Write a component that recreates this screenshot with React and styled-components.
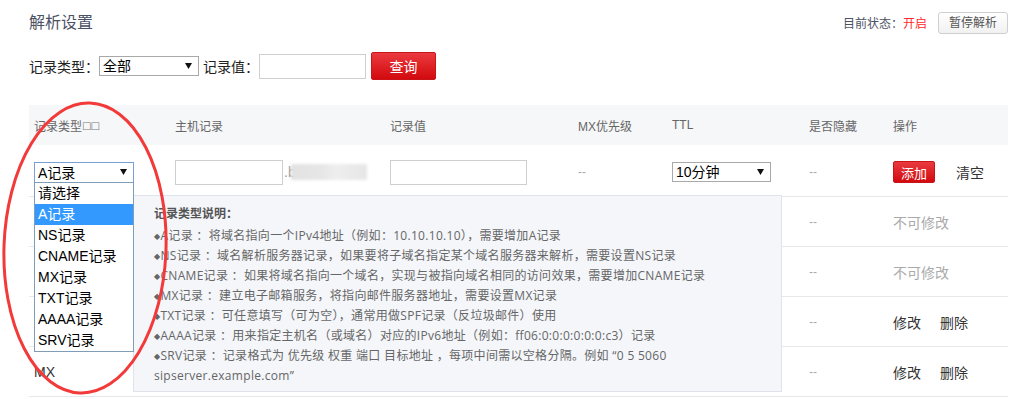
import React from 'react';
import styled, { createGlobalStyle } from 'styled-components';

const GlobalStyle = createGlobalStyle`
  html, body { margin: 0; padding: 0; background: #fff; }
  body { font-family: "Liberation Sans", "Noto Sans CJK SC", sans-serif; color: #333; }
  * { box-sizing: border-box; }
`;

const Page = styled.div`
  position: relative;
  width: 1019px;
  height: 399px;
  overflow: hidden;
  padding: 0 11px 0 29px;
`;

const TopBar = styled.div`
  height: 45px;
  display: flex;
  align-items: center;
  justify-content: space-between;
`;

const Title = styled.h1`
  margin: 0;
  font-size: 16px;
  font-weight: normal;
  line-height: 20px;
  color: #4b5263;
`;

const Status = styled.div`
  display: flex;
  align-items: center;
  font-size: 12px;
  color: #4b5263;
`;

const StatusOn = styled.span`
  color: #ff2a2a;
  margin-right: 11px;
`;

const GhostButton = styled.button`
  height: 22px;
  padding: 0 10px;
  border: 1px solid #cfcfcf;
  border-radius: 3px;
  background: linear-gradient(#ffffff, #f1f1f1);
  font-family: inherit;
  font-size: 12px;
  color: #555;
  line-height: 20px;
`;

const FilterRow = styled.div`
  display: flex;
  align-items: center;
  height: 28px;
  margin-top: 7px;
  font-size: 14px;
  color: #222;
`;

const Label = styled.span`
  margin-left: ${p => p.$ml || 0}px;
`;

const FakeSelect = styled.div`
  position: relative;
  width: ${p => p.$w}px;
  height: ${p => p.$h || 20}px;
  border: 1px solid ${p => (p.$focus ? '#7a9fd6' : '#a9a9a9')};
  background: #fff;
  display: flex;
  align-items: flex-end;
  padding: 0 0 0 3px;
  font-size: 14px;
  line-height: 17px;
  color: #000;
`;

const Arrow = styled.svg`
  position: absolute;
  right: 6px;
  top: 6px;
`;

const TextInput = styled.div`
  width: ${p => p.$w}px;
  height: 25px;
  border: 1px solid #cfcfcf;
  background: #fff;
  margin-left: ${p => p.$ml || 0}px;
`;

const RedButton = styled.button`
  width: ${p => p.$w}px;
  height: ${p => p.$h}px;
  margin-left: ${p => p.$ml || 0}px;
  border: 1px solid #c9141a;
  border-radius: 2px;
  background: linear-gradient(#ea3a3f, #d20a0e);
  color: #fff;
  font-family: inherit;
  font-size: ${p => p.$fs}px;
  padding: 0;
`;

const Table = styled.div`
  margin-top: 25px;
  width: 979px;
`;

const cols = '141px 215px 188px 94px 137px 84px 120px';

const HeadRow = styled.div`
  display: grid;
  grid-template-columns: ${cols};
  height: 40px;
  align-items: center;
  background: #f6f7f9;
  font-size: 12px;
  color: #666;
`;

const Boxes = styled.span`
  font-family: "DejaVu Sans", sans-serif;
  font-size: 10px;
  letter-spacing: -1px;
  color: #777;
`;

const Row = styled.div`
  position: relative;
  display: grid;
  grid-template-columns: ${cols};
  height: ${p => p.$h}px;
  align-items: center;
  padding-top: ${p => p.$pt || 0}px;
  border-bottom: 1px solid #e8e8e8;
`;

const Cell = styled.div`
  position: relative;
  display: flex;
  align-items: center;
  padding-left: 5px;
  font-size: ${p => p.$fs || 14}px;
  color: ${p => p.$c || '#333'};
`;

const Dash = styled.span`
  font-size: 12px;
  color: #aaa;
`;

const Domain = styled.span`
  display: flex;
  align-items: center;
  font-size: 14px;
  color: #999;
  margin-left: 1px;
`;

const Blur = styled.span`
  display: inline-block;
  width: 76px;
  height: 16px;
  margin-left: -5px;
  background: linear-gradient(90deg, #e2e2e2 0%, #e6e6e6 40%, #eeeeee 60%, #e6e6e6 100%);
  filter: blur(1.5px);
`;

const Action = styled.span`
  margin-left: ${p => p.$ml || 0}px;
  color: ${p => p.$c || '#333'};
  font-size: 14px;
`;

const DropList = styled.div`
  position: absolute;
  left: 5px;
  top: 37px;
  width: 100px;
  border: 1px solid #7f9db9;
  background: #fff;
  z-index: 3;
`;

const DropItem = styled.div`
  height: 21px;
  line-height: 21px;
  padding-left: 3px;
  font-size: 14px;
  color: ${p => (p.$active ? '#fff' : '#000')};
  background: ${p => (p.$active ? '#3399ff' : '#fff')};
`;

const HelpPanel = styled.div`
  position: absolute;
  left: 104px;
  top: 50px;
  width: 649px;
  height: 197px;
  padding: 8px 20px 7px;
  background: #f4f6fa;
  border: 1px solid #dfe4ec;
  font-family: "Open Sans", "Noto Sans CJK SC", sans-serif;
  font-size: 12px;
  line-height: 20px;
  color: #666;
  z-index: 2;
`;

const HelpTitle = styled.div`
  font-weight: bold;
  color: #555;
  margin-bottom: 2px;
`;

const HelpLine = styled.div`
  letter-spacing: 0.3px;
`;

const Bullet = styled.span`
  font-family: "DejaVu Sans", sans-serif;
  font-size: 8px;
  line-height: 12px;
  color: #666;
  vertical-align: 1px;
`;

const Ellipse = styled.svg`
  position: absolute;
  left: 0;
  top: 98px;
  z-index: 5;
  pointer-events: none;
`;

const ArrowIcon = () => (
  <Arrow width="7" height="6" viewBox="0 0 7 6">
    <path d="M0 0 H7 L3.5 6 Z" fill="#111" />
  </Arrow>
);

const options = ['请选择', 'A记录', 'NS记录', 'CNAME记录', 'MX记录', 'TXT记录', 'AAAA记录', 'SRV记录'];

const helpLines = [
  'A记录 ：将域名指向一个IPv4地址（例如：10.10.10.10），需要增加A记录',
  'NS记录 ：域名解析服务器记录，如果要将子域名指定某个域名服务器来解析，需要设置NS记录',
  'CNAME记录 ：如果将域名指向一个域名，实现与被指向域名相同的访问效果，需要增加CNAME记录',
  'MX记录 ：建立电子邮箱服务，将指向邮件服务器地址，需要设置MX记录',
  'TXT记录 ：可任意填写（可为空），通常用做SPF记录（反垃圾邮件）使用',
  'AAAA记录 ：用来指定主机名（或域名）对应的IPv6地址（例如：ff06:0:0:0:0:0:0:c3）记录',
  'SRV记录 ：记录格式为 优先级 权重 端口 目标地址 ，每项中间需以空格分隔。例如  “0 5 5060 sipserver.example.com”',
];

export default function App() {
  return (
    <>
      <GlobalStyle />
      <Page>
        <TopBar>
          <Title>解析设置</Title>
          <Status>
            <span>目前状态：</span>
            <StatusOn>开启</StatusOn>
            <GhostButton>暂停解析</GhostButton>
          </Status>
        </TopBar>

        <FilterRow>
          <Label>记录类型：</Label>
          <FakeSelect $w={100} $h={20}>
            全部
            <ArrowIcon />
          </FakeSelect>
          <Label $ml={4}>记录值：</Label>
          <TextInput $w={107} />
          <RedButton $w={65} $h={28} $ml={5} $fs={14}>查询</RedButton>
        </FilterRow>

        <Table>
          <HeadRow>
            <Cell $fs={12} $c="#666">记录类型<Boxes>□□</Boxes></Cell>
            <Cell $fs={12} $c="#666">主机记录</Cell>
            <Cell $fs={12} $c="#666">记录值</Cell>
            <Cell $fs={12} $c="#666">MX优先级</Cell>
            <Cell $fs={12} $c="#666">TTL</Cell>
            <Cell $fs={12} $c="#666">是否隐藏</Cell>
            <Cell $fs={12} $c="#666">操作</Cell>
          </HeadRow>

          <Row $h={52} $pt={3}>
            <Cell>
              <FakeSelect $w={100} $h={21} $focus>
                A记录
                <ArrowIcon />
              </FakeSelect>
            </Cell>
            <Cell>
              <TextInput $w={108} />
              <Domain>
                .b<Blur />
              </Domain>
            </Cell>
            <Cell>
              <TextInput $w={137} />
            </Cell>
            <Cell><Dash>--</Dash></Cell>
            <Cell>
              <FakeSelect $w={99} $h={20}>
                10分钟
                <ArrowIcon />
              </FakeSelect>
            </Cell>
            <Cell><Dash>--</Dash></Cell>
            <Cell>
              <RedButton $w={42} $h={22} $fs={13}>添加</RedButton>
              <Action $ml={21}>清空</Action>
            </Cell>

            <DropList>
              {options.map(o => (
                <DropItem key={o} $active={o === 'A记录'}>{o}</DropItem>
              ))}
            </DropList>

            <HelpPanel>
              <HelpTitle>记录类型说明：</HelpTitle>
              {helpLines.map(l => (
                <HelpLine key={l}>
                  <Bullet>◆</Bullet>
                  {l}
                </HelpLine>
              ))}
            </HelpPanel>
          </Row>

          <Row $h={50}>
            <Cell />
            <Cell />
            <Cell />
            <Cell />
            <Cell />
            <Cell><Dash>--</Dash></Cell>
            <Cell><Action $c="#aaa">不可修改</Action></Cell>
          </Row>
          <Row $h={50}>
            <Cell />
            <Cell />
            <Cell />
            <Cell />
            <Cell />
            <Cell><Dash>--</Dash></Cell>
            <Cell><Action $c="#aaa">不可修改</Action></Cell>
          </Row>
          <Row $h={50}>
            <Cell />
            <Cell />
            <Cell />
            <Cell />
            <Cell />
            <Cell><Dash>--</Dash></Cell>
            <Cell>
              <Action>修改</Action>
              <Action $ml={19}>删除</Action>
            </Cell>
          </Row>
          <Row $h={50}>
            <Cell>MX</Cell>
            <Cell />
            <Cell />
            <Cell />
            <Cell />
            <Cell><Dash>--</Dash></Cell>
            <Cell>
              <Action>修改</Action>
              <Action $ml={19}>删除</Action>
            </Cell>
          </Row>
        </Table>

        <Ellipse width="180" height="300" viewBox="0 0 180 300">
          <ellipse
            cx="85"
            cy="150"
            rx="81"
            ry="145"
            fill="none"
            stroke="#f23a3a"
            strokeWidth="3"
            transform="rotate(2 85 150)"
          />
        </Ellipse>
      </Page>
    </>
  );
}
